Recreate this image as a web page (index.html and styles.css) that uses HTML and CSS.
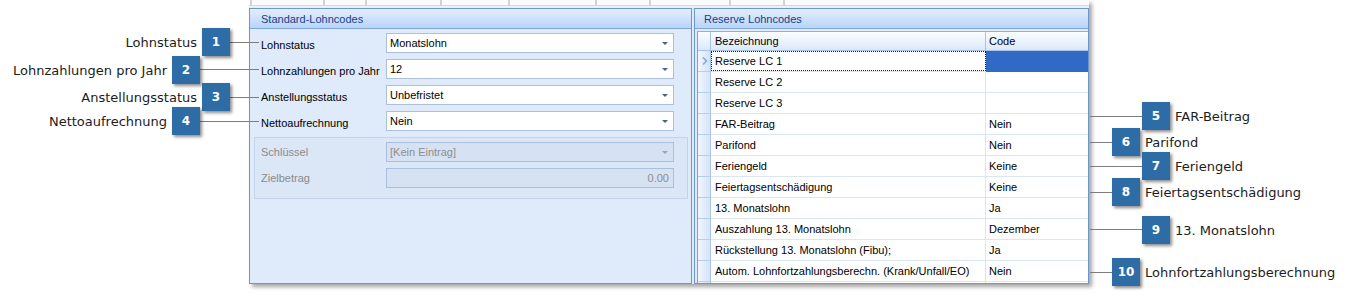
FILE: index.html
```html
<!DOCTYPE html>
<html lang="de">
<head>
<meta charset="utf-8">
<title>Lohncodes</title>
<link rel="stylesheet" href="styles.css">
</head>
<body>
<div class="stage">
  <div class="window">
    <div class="tabstrip">
      <span></span><span></span><span></span><span></span><span></span><span></span><span></span><span></span><span></span><span class="tab-rest"></span>
    </div>
    <div class="panels">
      <section class="panel panel-left">
        <header class="panel-head">Standard-Lohncodes</header>
        <div class="panel-body form">
          <div class="form-row">
            <span class="form-label">Lohnstatus</span>
            <div class="combo"><span class="combo-text">Monatslohn</span><span class="combo-arrow"></span></div>
          </div>
          <div class="form-row">
            <span class="form-label">Lohnzahlungen pro Jahr</span>
            <div class="combo"><span class="combo-text">12</span><span class="combo-arrow"></span></div>
          </div>
          <div class="form-row">
            <span class="form-label">Anstellungsstatus</span>
            <div class="combo"><span class="combo-text">Unbefristet</span><span class="combo-arrow"></span></div>
          </div>
          <div class="form-row">
            <span class="form-label">Nettoaufrechnung</span>
            <div class="combo"><span class="combo-text">Nein</span><span class="combo-arrow"></span></div>
          </div>
          <div class="group is-disabled">
            <div class="form-row">
              <span class="form-label">Schlüssel</span>
              <div class="combo"><span class="combo-text">[Kein Eintrag]</span><span class="combo-arrow"></span></div>
            </div>
            <div class="form-row">
              <span class="form-label">Zielbetrag</span>
              <div class="combo combo-number"><span class="combo-text">0.00</span></div>
            </div>
          </div>
        </div>
      </section>
      <section class="panel panel-right">
        <header class="panel-head">Reserve Lohncodes</header>
        <div class="panel-body grid-wrap">
          <div class="grid">
            <div class="grid-row grid-header"><span class="ind"></span><span class="cell name">Bezeichnung</span><span class="cell code">Code</span></div>
            <div class="grid-row is-current"><span class="ind"><svg class="chev" width="6" height="8" viewBox="0 0 6 8"><path d="M1 0.5 L4.5 4 L1 7.5" fill="none" stroke="#86a9d9" stroke-width="1.6"/></svg></span><span class="cell name focus">Reserve LC 1</span><span class="cell code selected"></span></div>
            <div class="grid-row"><span class="ind"></span><span class="cell name">Reserve LC 2</span><span class="cell code"></span></div>
            <div class="grid-row"><span class="ind"></span><span class="cell name">Reserve LC 3</span><span class="cell code"></span></div>
            <div class="grid-row"><span class="ind"></span><span class="cell name">FAR-Beitrag</span><span class="cell code">Nein</span></div>
            <div class="grid-row"><span class="ind"></span><span class="cell name">Parifond</span><span class="cell code">Nein</span></div>
            <div class="grid-row"><span class="ind"></span><span class="cell name">Feriengeld</span><span class="cell code">Keine</span></div>
            <div class="grid-row"><span class="ind"></span><span class="cell name">Feiertagsentschädigung</span><span class="cell code">Keine</span></div>
            <div class="grid-row"><span class="ind"></span><span class="cell name">13. Monatslohn</span><span class="cell code">Ja</span></div>
            <div class="grid-row"><span class="ind"></span><span class="cell name">Auszahlung 13. Monatslohn</span><span class="cell code">Dezember</span></div>
            <div class="grid-row"><span class="ind"></span><span class="cell name">Rückstellung 13. Monatslohn (Fibu);</span><span class="cell code">Ja</span></div>
            <div class="grid-row"><span class="ind"></span><span class="cell name">Autom. Lohnfortzahlungsberechn. (Krank/Unfall/EO)</span><span class="cell code">Nein</span></div>
            <div class="grid-row"><span class="ind"></span><span class="cell name"></span><span class="cell code"></span></div>
          </div>
        </div>
      </section>
    </div>
  </div>

  <div class="annotations">
    <span class="leader l1"></span>
    <span class="leader l2"></span>
    <span class="leader l3"></span>
    <span class="leader l4"></span>
    <span class="leader l5"></span>
    <span class="leader l6"></span>
    <span class="leader l7"></span>
    <span class="leader l8"></span>
    <span class="leader l9"></span>
    <span class="leader l10"></span>

    <div class="callout left c1"><span class="badge">1</span><span class="callout-label">Lohnstatus</span></div>
    <div class="callout left c2"><span class="badge">2</span><span class="callout-label">Lohnzahlungen pro Jahr</span></div>
    <div class="callout left c3"><span class="badge">3</span><span class="callout-label">Anstellungsstatus</span></div>
    <div class="callout left c4"><span class="badge">4</span><span class="callout-label">Nettoaufrechnung</span></div>
    <div class="callout right c5"><span class="badge">5</span><span class="callout-label">FAR-Beitrag</span></div>
    <div class="callout right c6"><span class="badge">6</span><span class="callout-label">Parifond</span></div>
    <div class="callout right c7"><span class="badge">7</span><span class="callout-label">Feriengeld</span></div>
    <div class="callout right c8"><span class="badge">8</span><span class="callout-label">Feiertagsentschädigung</span></div>
    <div class="callout right c9"><span class="badge">9</span><span class="callout-label">13. Monatslohn</span></div>
    <div class="callout right c10"><span class="badge">10</span><span class="callout-label">Lohnfortzahlungsberechnung</span></div>
  </div>
</div>
</body>
</html>
```
FILE: styles.css
```css
* { box-sizing: border-box; }

html, body {
  margin: 0;
  padding: 0;
  background: #ffffff;
}

body {
  font-family: "Liberation Sans", Arial, sans-serif;
  font-size: 11px;
  color: #000;
  overflow: hidden;
}

.stage {
  position: relative;
  width: 1350px;
  height: 297px;
  overflow: hidden;
}

/* ---------- application window ---------- */
.window {
  margin-left: 249px;
  width: 840px;
  height: 284px;
  display: flex;
  flex-direction: column;
  background: #f3f5f8;
  box-shadow: 3px 3px 4px rgba(0, 0, 0, 0.35);
}

.tabstrip {
  height: 8px;
  display: grid;
  grid-template-columns: 3px 73px 42px 75px 68px 87px 54px 80px 54px 1fr;
  align-items: start;
  background: linear-gradient(#f7f7f7, #eceef2);
}

.tabstrip span {
  height: 6px;
  background: #fbfbfb;
  border-right: 2px solid #d2d2d2;
  border-bottom: 1px solid #d6d9de;
}

.tabstrip .tab-rest { border-right: 0; }

.panels {
  height: 276px;
  display: flex;
  gap: 2px;
  background: #dfeafb;
}

.panel {
  display: flex;
  flex-direction: column;
  border: 1px solid #6b96d0;
  background: #dfeafb;
  overflow: hidden;
}

.panel-left { width: 443px; flex: none; }
.panel-right { flex: 1; min-width: 0; }

.panel-head {
  height: 20px;
  flex: none;
  display: flex;
  align-items: center;
  padding-left: 11px;
  padding-top: 1px;
  color: #15428b;
  background: linear-gradient(#e3eefd 0%, #d0e2fb 45%, #b9d4f8 100%);
  border-bottom: 1px solid #80a6da;
}

.panel-right .panel-head { padding-left: 9px; }

.panel-body {
  flex: 1;
  min-height: 0;
  overflow: hidden;
}

/* ---------- form ---------- */
.form {
  padding: 4px 3px 0 4px;
}

.form-row {
  display: flex;
  align-items: center;
  height: 20px;
  margin-bottom: 6px;
  padding-left: 7px;
}

.form-label {
  width: 125px;
  flex: none;
  padding-top: 3px;
}

.combo {
  width: 288px;
  height: 20px;
  flex: none;
  display: flex;
  align-items: center;
  justify-content: space-between;
  padding: 0 5px 1px 3px;
  background: #ffffff;
  border: 1px solid #abc0dd;
}

.combo-arrow {
  width: 0;
  height: 0;
  margin-top: 2px;
  border-left: 3px solid transparent;
  border-right: 3px solid transparent;
  border-top: 3px solid #4c6189;
}

.combo-number { justify-content: flex-end; padding-right: 4px; }

.group {
  width: 434px;
  padding: 4px 0 10px 0;
  border: 1px solid #c2d3ea;
  background: #dbe6f6;
}

.group .form-row { padding-left: 6px; }
.group .form-row:last-child { margin-bottom: 0; }

.is-disabled .form-label { color: #8b8b8b; padding-top: 0; }
.is-disabled .combo {
  background: #d6e1f2;
  border-color: #a9bfdf;
  color: #8e8e8e;
}
.is-disabled .combo-arrow { border-top-color: #9aa6b8; }

/* ---------- grid ---------- */
.grid-wrap {
  padding: 2px 0 0 2px;
}

.grid {
  border-left: 1px solid #7aa0d6;
  border-top: 1px solid #8fb0de;
  background: #ffffff;
}

.grid-row {
  display: flex;
  height: 21px;
  border-bottom: 1px solid #dae5f5;
}

.ind {
  width: 13px;
  flex: none;
  display: flex;
  align-items: center;
  justify-content: center;
  background: linear-gradient(to right, #f1f6fe, #d4e3f8);
  border-right: 1px solid #a8c2e8;
  border-bottom: 1px solid #b6cdee;
  margin-bottom: -1px;
}

.cell {
  display: flex;
  align-items: center;
  white-space: nowrap;
  overflow: hidden;
}

.cell.name {
  width: 275px;
  flex: none;
  padding-left: 4px;
  border-right: 1px solid #dae5f5;
}

.cell.code {
  flex: 1;
  padding-left: 3px;
}

.grid-header {
  height: 19px;
  border-bottom: 1px solid #a9c3e7;
  background: linear-gradient(#fbfdff, #dbe8fb);
}

.grid-header .ind {
  background: linear-gradient(#fbfdff, #dbe8fb);
  border-bottom: 0;
  margin-bottom: 0;
  border-right-color: #a9c3e7;
}

.grid-header .cell.name { border-right: 1px solid #a9c3e7; }

.cell.focus {
  outline: 1px dotted #1a1a1a;
  outline-offset: -1px;
}

.cell.selected {
  background: #316ac5;
  margin-bottom: -1px;
}

.chev { display: block; margin-left: 1px; }

/* ---------- annotations ---------- */
.annotations {
  position: absolute;
  inset: 0;
  pointer-events: none;
}

.leader {
  position: absolute;
  height: 1px;
  background: #7d7d7d;
}

.l1 { top: 42px; left: 230px; width: 29px; }
.l2 { top: 69px; left: 200px; width: 59px; }
.l3 { top: 97px; left: 230px; width: 29px; }
.l4 { top: 121px; left: 200px; width: 59px; }
.l5 { top: 116px; left: 1090px; width: 52px; }
.l6 { top: 142px; left: 1090px; width: 22px; }
.l7 { top: 166px; left: 1090px; width: 52px; }
.l8 { top: 192px; left: 1090px; width: 22px; }
.l9 { top: 229px; left: 1090px; width: 52px; }
.l10 { top: 272px; left: 1090px; width: 22px; }

.callout {
  position: absolute;
  width: 28px;
  height: 28px;
}

.badge {
  display: flex;
  align-items: center;
  justify-content: center;
  width: 28px;
  height: 28px;
  background: #2e6ca6;
  color: #ffffff;
  font-family: "DejaVu Sans", Verdana, sans-serif;
  font-weight: bold;
  font-size: 12px;
  box-shadow: 2px 2px 3px rgba(0, 0, 0, 0.45);
}

.callout-label {
  position: absolute;
  top: 0;
  height: 28px;
  line-height: 29px;
  white-space: nowrap;
  font-family: "DejaVu Sans", Verdana, sans-serif;
  font-size: 13px;
  color: #1c1c1c;
}

.callout.left .callout-label { right: calc(100% + 5px); }
.callout.right .callout-label { left: calc(100% + 5px); }

.c1 { left: 202px; top: 28px; }
.c2 { left: 172px; top: 56px; }
.c3 { left: 202px; top: 83px; }
.c4 { left: 172px; top: 107px; }
.c5 { left: 1142px; top: 102px; }
.c6 { left: 1112px; top: 128px; }
.c7 { left: 1142px; top: 152px; }
.c8 { left: 1112px; top: 178px; }
.c9 { left: 1142px; top: 216px; }
.c10 { left: 1112px; top: 258px; }
```
